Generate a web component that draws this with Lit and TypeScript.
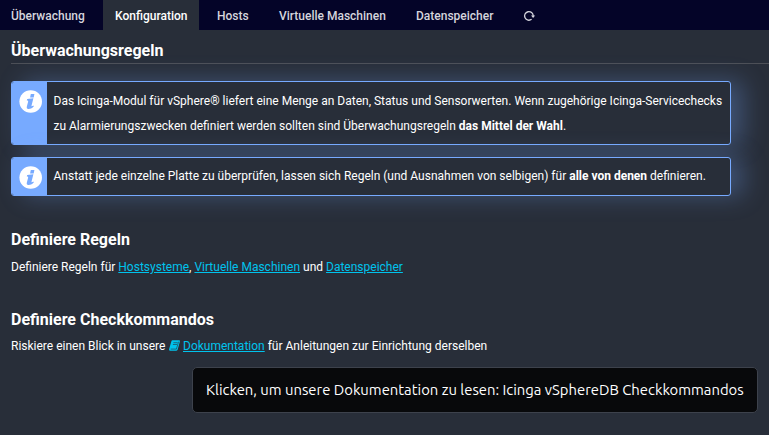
import { LitElement, html, css } from "lit";
import { customElement } from "lit/decorators.js";

@customElement("info-hint")
class InfoHint extends LitElement {
  static styles = css`
    :host { display: block; }
    .hint {
      display: flex;
      box-sizing: border-box;
      width: 720px;
      border: 1px solid #77aaff;
      border-radius: 3px;
      background: #282e39;
      box-shadow: 12px 0 24px rgba(119, 170, 255, 0.3);
      line-height: 25px;
      overflow: hidden;
    }
    .mark { width: 35px; flex: none; background: #77aaff; box-sizing: border-box; padding: 8px 0 0 7px; }
    .mark svg { display: block; width: 23px; height: 23px; }
    .text { padding: 6px 0 6px 6.5px; white-space: nowrap; }
    :host([tall]) .text { padding: 7px 0 5px 6.5px; }
  `;
  render() {
    return html`<div class="hint">
      <div class="mark">
        <svg viewBox="0 0 23 23">
          <circle cx="11.7" cy="11.5" r="11.3" fill="#fff" />
          <path fill="#77aaff" d="M11.8 4h3.6l-.7 3.4h-3.6zM8.2 9.1l6.2-.8-1.9 7.5c-.2.8.5.7 1.9-.3l.4 1c-2.1 1.9-3.8 2.6-5.3 2.5-1.4-.1-2-.9-1.7-2.3l1.3-5c.2-.9-.2-1.2-1.3-1.2z" />
        </svg>
      </div>
      <div class="text"><slot></slot></div>
    </div>`;
  }
}

@customElement("app-root")
class AppRoot extends LitElement {
  static styles = css`
    :host {
      display: block;
      position: relative;
      width: 769px;
      height: 435px;
      overflow: hidden;
      background: #282e39;
      color: #fff;
      font: 12px/18px Roboto, sans-serif;
    }
    .tabs { display: flex; height: 30px; background: #040428; color: #d5d5dd; font-weight: 500; line-height: 32px; white-space: nowrap; }
    .tab { box-sizing: border-box; flex: none; height: 30px; }
    .t0 { width: 103px; padding-left: 11px; }
    .t1 { width: 96px; padding-left: 12px; background: #282e39; color: #fff; }
    .t2 { width: 62px; padding-left: 18px; }
    .t3 { width: 137px; padding-left: 18px; }
    .t4 { width: 125px; padding-left: 18px; }
    .reload { padding: 10px 0 0; }
    .reload svg { display: block; }
    h1, h2 { margin: 0; font-size: 16px; font-weight: 700; line-height: 22px; white-space: nowrap; }
    h1 { margin-left: 11px; padding-top: 10px; height: 34px; box-sizing: border-box; border-bottom: 1px solid #4d5057; }
    .hints { display: flex; flex-direction: column; gap: 12px; padding: 17px 0 0 11px; }
    section { padding-left: 11px; white-space: nowrap; }
    .rules { padding-top: 33px; }
    .commands { padding-top: 33px; }
    p { margin: 7px 0 0; }
    .commands p { margin-top: 6px; }
    a { color: #00c3ed; text-decoration: underline; }
    .book { width: 11px; height: 11px; vertical-align: -1px; margin: 0 3.3px 0 0.4px; }
    .tooltip {
      position: absolute;
      left: 192px;
      top: 367px;
      width: 566px;
      height: 46px;
      box-sizing: border-box;
      border: 1px solid #3d424c;
      border-radius: 5px;
      background: #08090b;
      padding-left: 13px;
      font: 14.84px/44px Ubuntu, "Noto Sans", sans-serif;
      white-space: nowrap;
    }
  `;
  render() {
    return html`
      <nav class="tabs">
        <div class="tab t0">Überwachung</div>
        <div class="tab t1">Konfiguration</div>
        <div class="tab t2">Hosts</div>
        <div class="tab t3">Virtuelle Maschinen</div>
        <div class="tab t4">Datenspeicher</div>
        <div class="reload">
          <svg width="13" height="12" viewBox="0 0 13 12">
            <path d="M8.6 9.3A4.3 4.3 0 1 1 10.2 6" fill="none" stroke="#d5d5dd" stroke-width="1.3" />
            <path d="M8 5.6h4.2L10.1 8z" fill="#d5d5dd" />
          </svg>
        </div>
      </nav>
      <h1>Überwachungsregeln</h1>
      <div class="hints">
        <info-hint tall>Das Icinga-Modul für vSphere® liefert eine Menge an Daten, Status und Sensorwerten. Wenn zugehörige Icinga-Servicechecks<br />zu Alarmierungszwecken definiert werden sollten sind Überwachungsregeln <b>das Mittel der Wahl</b>.</info-hint>
        <info-hint>Anstatt jede einzelne Platte zu überprüfen, lassen sich Regeln (und Ausnahmen von selbigen) für <b>alle von denen</b> definieren.</info-hint>
      </div>
      <section class="rules">
        <h2>Definiere Regeln</h2>
        <p>Definiere Regeln für <a>Hostsysteme</a>, <a>Virtuelle Maschinen</a> und <a>Datenspeicher</a></p>
      </section>
      <section class="commands">
        <h2>Definiere Checkkommandos</h2>
        <p>Riskiere einen Blick in unsere <svg class="book" viewBox="0 0 11 11"><path d="M3.4.3h6.8c.7 0 .9.5.7 1.1L8.7 9.6c-.2.7-.6 1.1-1.3 1.1H1.5C.3 10.7-.2 9.8.2 8.7L2.4 1.2C2.6.6 2.9.3 3.4.3z" fill="#00c3ed" /><path d="M4.4 2.7h4.2M3.9 4.5h4.2M1.7 9.1h5.7L9.6 1.7" fill="none" stroke="#282e39" stroke-width=".6" /></svg><a>Dokumentation</a> für Anleitungen zur Einrichtung derselben</p>
      </section>
      <div class="tooltip">Klicken, um unsere Dokumentation zu lesen: Icinga vSphereDB Checkkommandos</div>
    `;
  }
}
